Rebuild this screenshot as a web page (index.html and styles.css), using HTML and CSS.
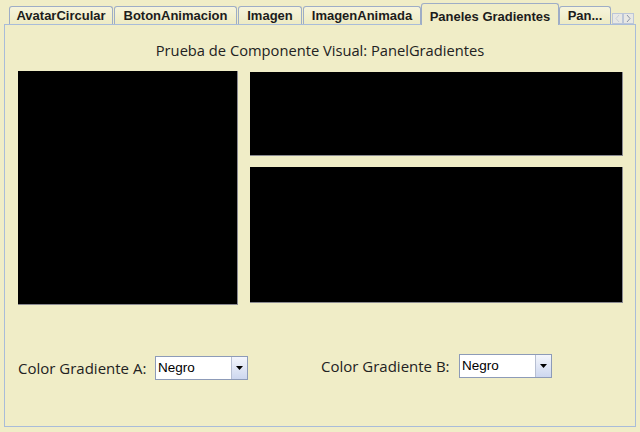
FILE: index.html
```html
<!DOCTYPE html>
<html lang="es">
<head>
<meta charset="utf-8">
<title>PanelGradientes</title>
<link rel="stylesheet" href="styles.css">
</head>
<body>
<div class="window">
  <div class="tabstrip">
    <div class="tab t-avatar">AvatarCircular</div>
    <div class="tab t-boton">BotonAnimacion</div>
    <div class="tab t-imagen">Imagen</div>
    <div class="tab t-animada">ImagenAnimada</div>
    <div class="tab t-paneles selected">Paneles Gradientes</div>
    <div class="tab t-pan">Pan...</div>
    <div class="scrollers">
      <span class="scroll disabled"><svg width="5" height="7" viewBox="0 0 5 7"><path d="M4 0 L1 3.5 L4 7" fill="none" stroke="#c8cdd8" stroke-width="1"/></svg></span>
      <span class="scroll"><svg width="5" height="7" viewBox="0 0 5 7"><path d="M1 0 L4 3.5 L1 7" fill="none" stroke="#8a93a8" stroke-width="1"/></svg></span>
    </div>
  </div>
  <div class="panel">
    <div class="title">Prueba de Componente Visual: PanelGradientes</div>
    <div class="content">
      <div class="grad grad-left"></div>
      <div class="right-col">
        <div class="grad grad-top"></div>
        <div class="grad grad-bottom"></div>
      </div>
    </div>
    <div class="controls">
      <div class="group group-a">
        <span class="label label-a">Color Gradiente A:</span>
        <div class="combo">
          <span class="combo-text">Negro</span>
          <span class="combo-btn"><svg width="7" height="4" viewBox="0 0 7 4"><path d="M0 0 H7 L3.5 4 Z" fill="#000"/></svg></span>
        </div>
      </div>
      <div class="group group-b">
        <span class="label label-b">Color Gradiente B:</span>
        <div class="combo">
          <span class="combo-text">Negro</span>
          <span class="combo-btn"><svg width="7" height="4" viewBox="0 0 7 4"><path d="M0 0 H7 L3.5 4 Z" fill="#000"/></svg></span>
        </div>
      </div>
    </div>
  </div>
</div>
</body>
</html>
```
FILE: styles.css
```css
html, body {
  margin: 0;
  padding: 0;
  background: #f0edc7;
}

.window {
  width: 640px;
  height: 432px;
  background: #f0edc7;
  font-family: "Open Sans", "Liberation Sans", sans-serif;
  color: #222;
  overflow: hidden;
}

.tabstrip {
  display: flex;
  align-items: flex-end;
  height: 24px;
  padding-left: 9px;
  position: relative;
  z-index: 2;
}

.tab {
  box-sizing: border-box;
  height: 18px;
  border: 1px solid #9eadc6;
  border-bottom: none;
  border-radius: 3px 3px 0 0;
  background: linear-gradient(#f6f4dc, #eeebc4);
  font-family: "Liberation Sans", Arial, sans-serif;
  font-weight: bold;
  font-size: 13px;
  line-height: 17px;
  color: #1c1c1c;
  text-align: center;
  white-space: nowrap;
  flex: 0 0 auto;
}

.t-avatar { width: 104px; margin-right: 1px; }
.t-boton { width: 123px; margin-right: 1px; }
.t-imagen { width: 64px; margin-right: 1px; }
.t-animada { width: 118px; }
.t-paneles { width: 138px; }
.t-pan { width: 52px; }

.tab.selected {
  height: 22px;
  margin-bottom: -1px;
  background: #f0edc7;
  border-color: #9eadc6;
  line-height: 17px;
  padding-top: 4px;
}

.scrollers {
  display: flex;
  margin-left: 1px;
}

.scroll {
  box-sizing: border-box;
  width: 11px;
  height: 11px;
  border: 1px solid #bcc6d8;
  background: #e8e8e4;
  display: flex;
  align-items: center;
  justify-content: center;
}

.panel {
  box-sizing: border-box;
  margin-left: 4px;
  width: 632px;
  height: 403px;
  border: 1px solid #a9bcd9;
  position: relative;
  z-index: 1;
}

.title {
  padding-top: 16px;
  height: 18px;
  line-height: 18px;
  font-size: 14.7px;
  text-align: center;
  color: #222;
}

.content {
  display: flex;
  padding-left: 13px;
  margin-top: 12px;
  gap: 12px;
}

.grad {
  box-sizing: border-box;
  background: #000;
  border-right: 1px solid #8a8a90;
  border-bottom: 1px solid #8a8a90;
}

.grad-left {
  width: 220px;
  height: 234px;
}

.right-col {
  display: flex;
  flex-direction: column;
  gap: 11px;
  margin-top: 1px;
}

.grad-top {
  width: 373px;
  height: 84px;
}

.grad-bottom {
  width: 373px;
  height: 136px;
}

.controls {
  display: flex;
  padding-left: 13px;
  margin-top: 49px;
  align-items: flex-start;
}

.group {
  display: flex;
  align-items: center;
}

.group-a {
  width: 303px;
  margin-top: 2px;
}

.label {
  font-size: 15px;
  color: #222;
  white-space: nowrap;
}

.label-a { width: 137px; }
.label-b { width: 138px; }

.combo {
  box-sizing: border-box;
  width: 93px;
  height: 24px;
  border: 1px solid #8d9bb8;
  background: #fff;
  display: flex;
}

.combo-text {
  flex: 1;
  padding-left: 2px;
  font-family: "Liberation Sans", Arial, sans-serif;
  font-size: 13.5px;
  line-height: 22px;
  color: #000;
}

.combo-btn {
  box-sizing: border-box;
  width: 16px;
  border-left: 1px solid #b7bfd2;
  background: linear-gradient(#f4f6fc, #cdd7ef);
  display: flex;
  align-items: center;
  justify-content: center;
}
```
